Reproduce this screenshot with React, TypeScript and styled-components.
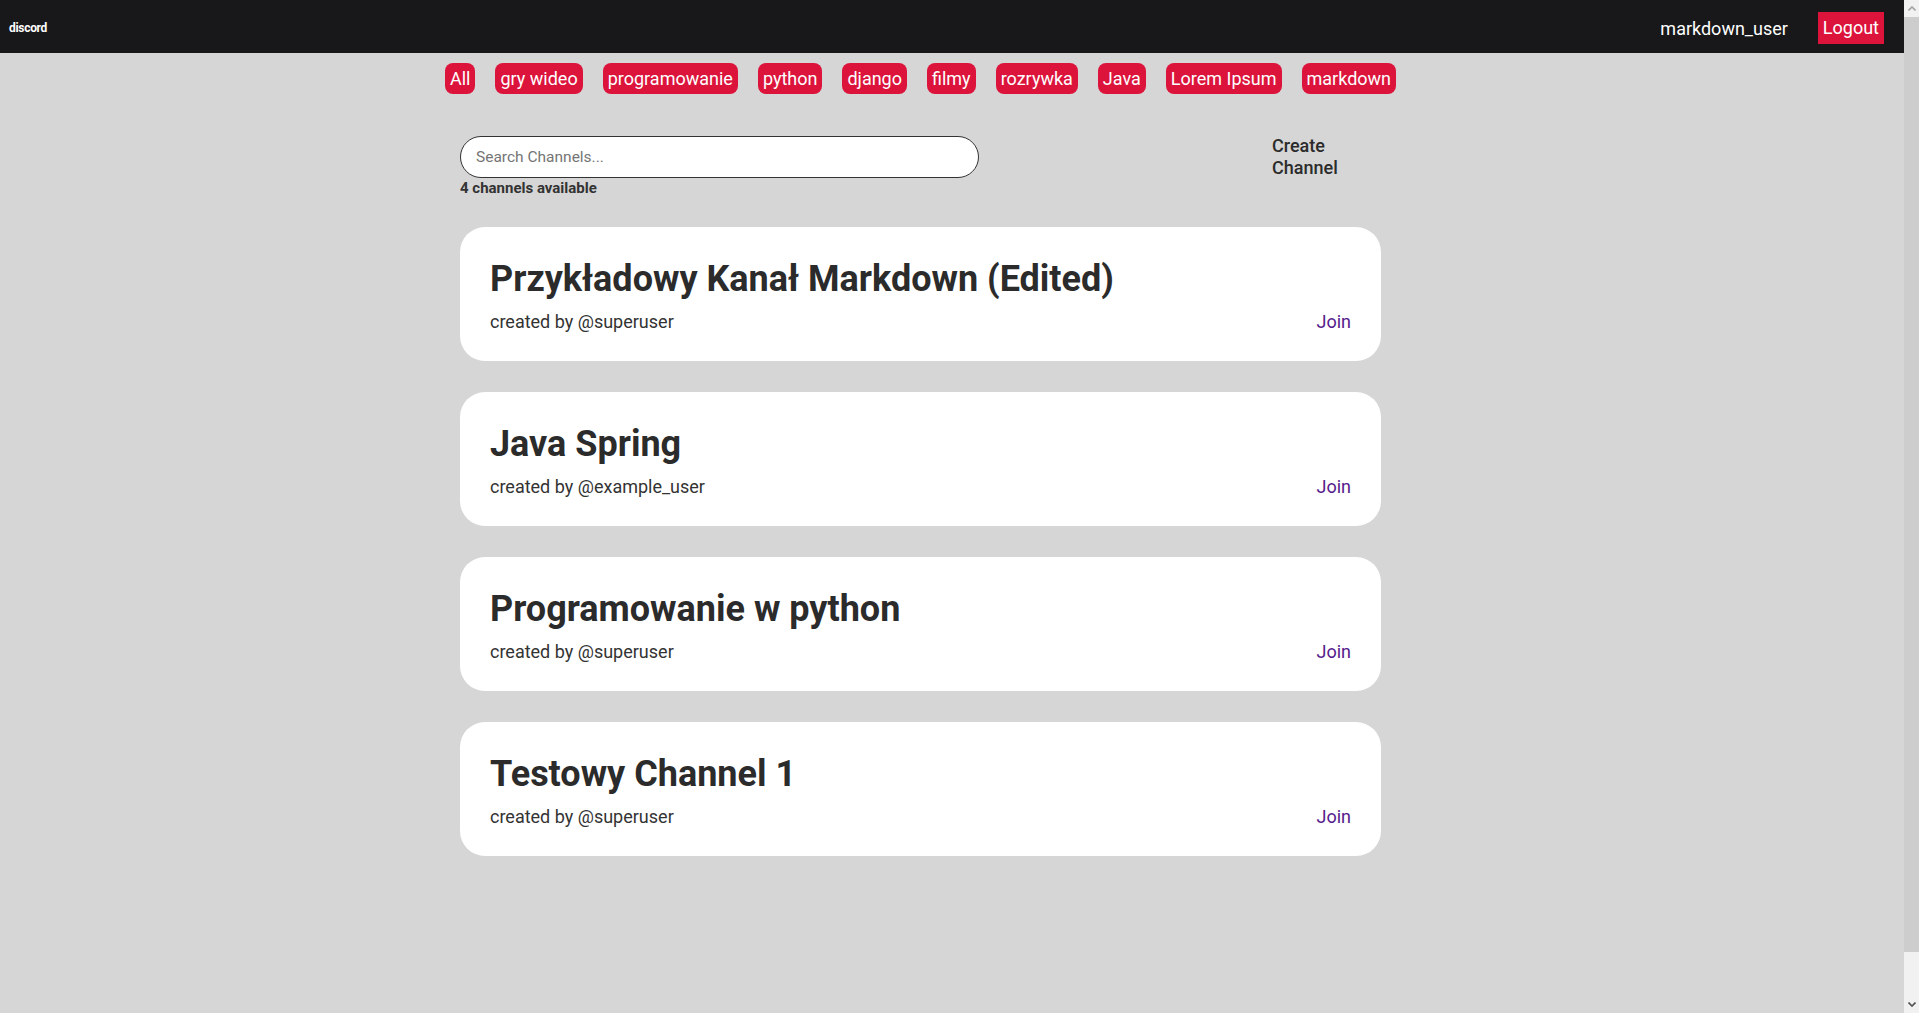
import React from "react";
import styled, { createGlobalStyle } from "styled-components";

const GlobalStyle = createGlobalStyle`
  html, body {
    margin: 0;
    padding: 0;
    background: #d6d6d6;
    font-family: Roboto, "Liberation Sans", Arial, sans-serif;
    color: #2b2b2b;
  }
  * { box-sizing: border-box; }
`;

const Page = styled.div`
  min-height: 1061px;
  padding-right: 15px;
  display: flex;
  flex-direction: column;
`;

const ScrollTrack = styled.div`
  position: fixed;
  top: 0;
  right: 0;
  bottom: 0;
  width: 15px;
  background: #f1f1f1;
  display: flex;
  flex-direction: column;
  z-index: 10;
`;

const ScrollArrow = styled.div<{ $dark?: boolean }>`
  height: 17px;
  display: flex;
  align-items: center;
  justify-content: center;
  color: ${(p) => (p.$dark ? "#505050" : "#a3a3a3")};
`;

const ScrollThumb = styled.div`
  height: 935px;
  background: #cdcdcd;
`;

const ScrollRest = styled.div`
  flex: 1;
`;

const Header = styled.header`
  height: 53px;
  background: #18181a;
  display: flex;
  align-items: center;
  justify-content: space-between;
  padding: 0 20px 0 9px;
`;

const Brand = styled.div`
  color: #ffffff;
  font-size: 12px;
  font-weight: 700;
  letter-spacing: -0.3px;
  padding-top: 2px;
`;

const UserArea = styled.div`
  display: flex;
  align-items: center;
  gap: 30px;
  padding-top: 3px;
`;

const UserName = styled.span`
  color: #ffffff;
  font-size: 18px;
`;

const LogoutButton = styled.button`
  background: #dc143c;
  color: #ffffff;
  border: none;
  font-family: inherit;
  font-size: 18px;
  line-height: 22px;
  padding: 5px 5px;
  cursor: pointer;
`;

const Main = styled.main`
  display: flex;
  justify-content: center;
  padding: 10px 63px 40px 0;
`;

const Column = styled.div`
  width: 921px;
  display: flex;
  flex-direction: column;
`;

const TagRow = styled.nav`
  display: flex;
  justify-content: center;
  gap: 20px;
  margin: 0 -40px;
`;

const Tag = styled.button`
  background: #dc143c;
  color: #ffffff;
  border: none;
  border-radius: 8px;
  font-family: inherit;
  font-size: 18px;
  line-height: 23px;
  padding: 4px 5px;
  cursor: pointer;
`;

const SearchRow = styled.div`
  margin-top: 42px;
  display: flex;
  justify-content: space-between;
  align-items: flex-start;
`;

const SearchColumn = styled.div`
  display: flex;
  flex-direction: column;
`;

const SearchInput = styled.input`
  width: 519px;
  height: 42px;
  border: 1px solid #333333;
  border-radius: 21px;
  background: #ffffff;
  padding: 0 15px;
  font-family: inherit;
  font-size: 15.5px;
  color: #333;
  outline: none;
  &::placeholder {
    color: #757575;
  }
`;

const Count = styled.div`
  margin-top: 2px;
  font-size: 15px;
  font-weight: 700;
  line-height: 17px;
  color: #333333;
`;

const CreateLink = styled.div`
  width: 109px;
  margin-top: -1px;
  font-size: 18px;
  font-weight: 500;
  line-height: 22px;
  color: #2b2b2b;
  cursor: pointer;
`;

const CardList = styled.div`
  margin-top: 30px;
  display: flex;
  flex-direction: column;
  gap: 31px;
`;

const Card = styled.article`
  background: #ffffff;
  border-radius: 25px;
  padding: 31px 30px 29px;
  display: flex;
  flex-direction: column;
  gap: 11px;
`;

const CardTitle = styled.h2`
  margin: 0;
  font-size: 36px;
  font-weight: 700;
  line-height: 42px;
  color: #2b2b2b;
`;

const CardMeta = styled.div`
  display: flex;
  justify-content: space-between;
  align-items: baseline;
  font-size: 18px;
  line-height: 21px;
`;

const Creator = styled.span`
  color: #333333;
`;

const JoinLink = styled.a`
  color: #551a8b;
  text-decoration: none;
  cursor: pointer;
`;

const tags = [
  "All",
  "gry wideo",
  "programowanie",
  "python",
  "django",
  "filmy",
  "rozrywka",
  "Java",
  "Lorem Ipsum",
  "markdown",
];

const channels = [
  { name: "Przykładowy Kanał Markdown (Edited)", author: "superuser" },
  { name: "Java Spring", author: "example_user" },
  { name: "Programowanie w python", author: "superuser" },
  { name: "Testowy Channel 1", author: "superuser" },
];

const Chevron = ({ up }: { up?: boolean }) => (
  <svg width="8" height="5" viewBox="0 0 8 5">
    <path
      d={up ? "M0.5 4.5 L4 1 L7.5 4.5" : "M0.5 0.5 L4 4 L7.5 0.5"}
      fill="none"
      stroke="currentColor"
      strokeWidth="1.6"
    />
  </svg>
);

export default function App() {
  return (
    <>
      <GlobalStyle />
      <Page>
        <Header>
          <Brand>discord</Brand>
          <UserArea>
            <UserName>markdown_user</UserName>
            <LogoutButton>Logout</LogoutButton>
          </UserArea>
        </Header>
        <Main>
          <Column>
            <TagRow>
              {tags.map((t) => (
                <Tag key={t}>{t}</Tag>
              ))}
            </TagRow>
            <SearchRow>
              <SearchColumn>
                <SearchInput placeholder="Search Channels..." />
                <Count>{channels.length} channels available</Count>
              </SearchColumn>
              <CreateLink>Create Channel</CreateLink>
            </SearchRow>
            <CardList>
              {channels.map((c) => (
                <Card key={c.name}>
                  <CardTitle>{c.name}</CardTitle>
                  <CardMeta>
                    <Creator>created by @{c.author}</Creator>
                    <JoinLink>Join</JoinLink>
                  </CardMeta>
                </Card>
              ))}
            </CardList>
          </Column>
        </Main>
      </Page>
      <ScrollTrack>
        <ScrollArrow>
          <Chevron up />
        </ScrollArrow>
        <ScrollThumb />
        <ScrollRest />
        <ScrollArrow $dark>
          <Chevron />
        </ScrollArrow>
      </ScrollTrack>
    </>
  );
}
